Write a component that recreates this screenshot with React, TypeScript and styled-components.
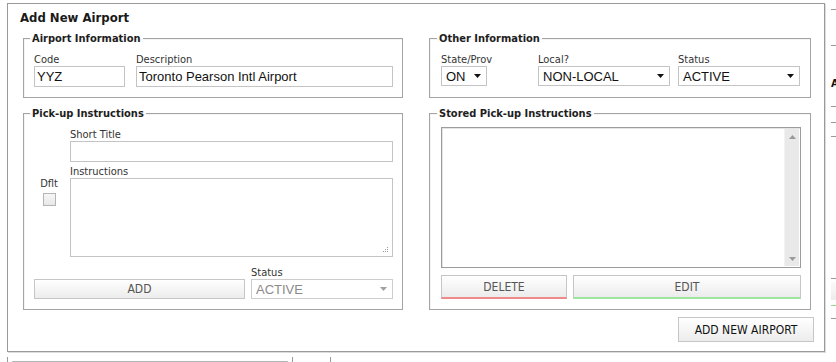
import React from "react";
import styled, { createGlobalStyle } from "styled-components";

const UI = `"DejaVu Sans Condensed", "DejaVu Sans", Verdana, sans-serif`;
const FIELD = `"Liberation Sans", Arial, sans-serif`;

const Global = createGlobalStyle`
  html, body { margin: 0; padding: 0; background: #fff; }
  body { font-family: ${UI}; color: #222; overflow: hidden; }
  * { box-sizing: border-box; }
`;

const Page = styled.div`
  width: 836px;
  height: 362px;
  overflow: hidden;
  padding: 3px 0 0 7px;
  display: flex;
  flex-direction: column;
`;

const TopRow = styled.div`
  display: flex;
  align-items: flex-start;
`;

const Panel = styled.section`
  flex: 0 0 818px;
  height: 349px;
  border: 1px solid #9a9a9a;
  box-shadow: 1px 1px 0 #dcdcdc;
  padding: 6px 13px 8px 15px;
  display: flex;
  flex-direction: column;
`;

const Title = styled.h1`
  margin: 0 0 5px -3px;
  font: bold 13px/16px ${UI};
  font-stretch: condensed;
  color: #1a1a1a;
`;

const Grid = styled.div`
  display: grid;
  grid-template-columns: 380px 382px;
  column-gap: 26px;
  row-gap: 8px;
`;

const Group = styled.fieldset<{ $pt?: number; $pl?: number }>`
  margin: 0;
  min-width: 0;
  border: 1px solid #a4a4a4;
  box-shadow: inset 1px 1px 0 #f4f4f4;
  padding: ${(p) => p.$pt ?? 8}px 9px 10px ${(p) => p.$pl ?? 10}px;
  display: flex;
  flex-direction: column;
`;

const Legend = styled.legend`
  margin-left: -4px;
  padding: 1px 2px 0 2px;
  font: bold 11px/13px ${UI};
  font-stretch: condensed;
  color: #1e1e1e;
`;

const Label = styled.label`
  display: block;
  font: 11px/13px ${UI};
  font-stretch: condensed;
  color: #333;
  white-space: nowrap;
`;

const FieldRow = styled.div<{ $cols: string; $gap: number }>`
  display: grid;
  grid-template-columns: ${(p) => p.$cols};
  column-gap: ${(p) => p.$gap}px;
  align-items: end;
`;

const Field = styled.div`
  display: flex;
  flex-direction: column;
  min-width: 0;
`;

const TextInput = styled.input`
  display: block;
  width: 100%;
  height: 21px;
  margin: 0;
  padding: 0 2px;
  border: 1px solid #c4c4c4;
  background: #fff;
  font: 13px ${FIELD};
  color: #111;
  outline: none;
`;

const SelectBox = styled.div<{ $w?: number; $disabled?: boolean }>`
  width: ${(p) => (p.$w ? `${p.$w}px` : "100%")};
  height: 20px;
  border: 1px solid ${(p) => (p.$disabled ? "#cdcdcd" : "#c4c4c4")};
  background: #fff;
  display: flex;
  align-items: center;
  justify-content: space-between;
  padding: 0 5px 0 4px;
  font: 13px ${FIELD};
  color: ${(p) => (p.$disabled ? "#8a8a8a" : "#111")};
`;

const Arrow = styled.svg<{ $disabled?: boolean }>`
  flex: 0 0 auto;
  width: 7px;
  height: 4px;
  fill: ${(p) => (p.$disabled ? "#a0a0a0" : "#111")};
`;

const Select = ({ value, w, disabled }: { value: string; w?: number; disabled?: boolean }) => (
  <SelectBox $w={w} $disabled={disabled} role="combobox">
    <span>{value}</span>
    <Arrow $disabled={disabled} viewBox="0 0 7 4">
      <path d="M0 0h7L3.5 4z" />
    </Arrow>
  </SelectBox>
);

const PickupBody = styled.div`
  display: grid;
  grid-template-columns: 30px 1fr;
  column-gap: 6px;
`;

const DfltCol = styled.div`
  display: flex;
  flex-direction: column;
  align-items: center;
  gap: 3px;
  padding-top: 49px;
`;

const Check = styled.span`
  display: block;
  width: 13px;
  height: 13px;
  border: 1px solid #b4b4b4;
  background: linear-gradient(#f6f6f6, #e8e8e8);
`;

const AreaWrap = styled.div`
  position: relative;
  height: 79px;
`;

const TextArea = styled.textarea`
  display: block;
  width: 100%;
  height: 100%;
  margin: 0;
  resize: none;
  border: 1px solid #c4c4c4;
  background: #fff;
  font: 13px ${FIELD};
  outline: none;
`;

const Grip = styled.svg`
  position: absolute;
  right: 4px;
  bottom: 4px;
  width: 7px;
  height: 7px;
  fill: #9a9a9a;
`;

const Spaced = styled.div<{ $mt: number }>`
  margin-top: ${(p) => p.$mt}px;
`;

const Button = styled.button<{ $accent?: string; $strong?: boolean; $h?: number }>`
  display: block;
  width: 100%;
  height: ${(p) => p.$h ?? 20}px;
  margin: 0;
  padding: 0;
  border: 1px solid #c6c6c6;
  ${(p) => (p.$accent ? `border-bottom: 2px solid ${p.$accent};` : "")}
  background: linear-gradient(#ffffff, #ececec);
  font: 12px ${UI};
  font-stretch: condensed;
  color: ${(p) => (p.$strong ? "#111" : "#555")};
  text-align: center;
  cursor: pointer;
`;

const ListBox = styled.div`
  height: 141px;
  border: 1px solid #9c9c9c;
  box-shadow: inset 1px 1px 0 #e4e4e4;
  background: #fff;
  display: flex;
  justify-content: flex-end;
  padding: 1px;
`;

const ScrollTrack = styled.div`
  width: 15px;
  background: #e9e9e9;
  border-left: 1px solid #f2f2f2;
  display: flex;
  flex-direction: column;
  justify-content: space-between;
  align-items: center;
  padding: 6px 0 5px;
`;

const ScrollArrow = styled.svg`
  width: 7px;
  height: 4px;
  fill: #9a9a9a;
`;

const ButtonRow = styled.div<{ $cols: string }>`
  display: grid;
  grid-template-columns: ${(p) => p.$cols};
  column-gap: 6px;
  margin-top: 7px;
`;

const BigButton = styled(Button)`
  width: 136px;
  align-self: flex-end;
  margin: 7px -3px 0 0;
`;

const Side = styled.div`
  flex: 0 0 200px;
  margin-left: 6px;
  display: flex;
  flex-direction: column;
`;

const SideRule = styled.div<{ $mt: number; $color?: string }>`
  margin-top: ${(p) => p.$mt}px;
  height: 1px;
  width: 40px;
  background: ${(p) => p.$color ?? "#9a9a9a"};
`;

const SideText = styled.div<{ $mt: number }>`
  margin-top: ${(p) => p.$mt}px;
  font: bold 11px/10px ${UI};
  color: #111;
`;

const SideBox = styled.div<{ $mt: number }>`
  margin-top: ${(p) => p.$mt}px;
  height: 18px;
  width: 40px;
  background: linear-gradient(#fafafa, #ececec);
`;

const BottomRow = styled.div`
  display: flex;
  height: 10px;
  margin-top: 5px;
`;

const BottomCell = styled.div<{ $w: number }>`
  flex: 0 0 ${(p) => p.$w}px;
  border-left: 1px solid #9a9a9a;
  padding: 4px 4px 0 4px;
`;

const StubInput = styled.div`
  height: 6px;
  border-top: 1px solid #b4b4b4;
  border-left: 1px solid #d0d0d0;
  border-right: 1px solid #d0d0d0;
`;

export default function App() {
  return (
    <>
      <Global />
      <Page>
        <TopRow>
          <Panel>
            <Title>Add New Airport</Title>
            <Grid>
              <Group>
                <Legend>Airport Information</Legend>
                <FieldRow $cols="91px 1fr" $gap={11}>
                  <Field>
                    <Label>Code</Label>
                    <TextInput defaultValue="YYZ" />
                  </Field>
                  <Field>
                    <Label>Description</Label>
                    <TextInput defaultValue="Toronto Pearson Intl Airport" />
                  </Field>
                </FieldRow>
              </Group>

              <Group $pl={11}>
                <Legend>Other Information</Legend>
                <FieldRow $cols="97px 140px 1fr" $gap={0}>
                  <Field>
                    <Label>State/Prov</Label>
                    <Select value="ON" w={46} />
                  </Field>
                  <Field>
                    <Label>Local?</Label>
                    <Select value="NON-LOCAL" w={132} />
                  </Field>
                  <Field>
                    <Label>Status</Label>
                    <Select value="ACTIVE" w={122} />
                  </Field>
                </FieldRow>
              </Group>

              <Group>
                <Legend>Pick-up Instructions</Legend>
                <PickupBody>
                  <DfltCol>
                    <Label>Dflt</Label>
                    <Check role="checkbox" aria-checked="false" />
                  </DfltCol>
                  <Field>
                    <Label>Short Title</Label>
                    <TextInput />
                    <Spaced $mt={3}>
                      <Label>Instructions</Label>
                    </Spaced>
                    <AreaWrap>
                      <TextArea />
                      <Grip viewBox="0 0 7 7">
                        <rect x="5" y="1" width="1" height="1" />
                        <rect x="3" y="3" width="1" height="1" />
                        <rect x="5" y="3" width="1" height="1" />
                        <rect x="1" y="5" width="1" height="1" />
                        <rect x="3" y="5" width="1" height="1" />
                        <rect x="5" y="5" width="1" height="1" />
                      </Grip>
                    </AreaWrap>
                  </Field>
                </PickupBody>
                <Spaced $mt={9}>
                  <FieldRow $cols="211px 1fr" $gap={6}>
                    <Button>ADD</Button>
                    <Field>
                      <Label>Status</Label>
                      <Select value="ACTIVE" disabled />
                    </Field>
                  </FieldRow>
                </Spaced>
              </Group>

              <Group $pl={11} $pt={7}>
                <Legend>Stored Pick-up Instructions</Legend>
                <ListBox>
                  <ScrollTrack>
                    <ScrollArrow viewBox="0 0 7 4">
                      <path d="M0 4h7L3.5 0z" />
                    </ScrollArrow>
                    <ScrollArrow viewBox="0 0 7 4">
                      <path d="M0 0h7L3.5 4z" />
                    </ScrollArrow>
                  </ScrollTrack>
                </ListBox>
                <ButtonRow $cols="126px 1fr">
                  <Button $accent="#f08a8a" $h={24}>DELETE</Button>
                  <Button $accent="#9ee59e" $h={24}>EDIT</Button>
                </ButtonRow>
              </Group>
            </Grid>
            <BigButton $strong $h={25}>ADD NEW AIRPORT</BigButton>
          </Panel>

          <Side>
            <SideRule $mt={6} />
            <SideRule $mt={35} />
            <SideText $mt={33}>A</SideText>
            <SideRule $mt={17} />
            <SideRule $mt={15} />
            <SideRule $mt={13} />
            <SideRule $mt={141} />
            <SideBox $mt={3} />
            <SideRule $mt={5} $color="#8fdc8f" />
            <SideRule $mt={12} />
          </Side>
        </TopRow>
        <BottomRow>
          <BottomCell $w={285}>
            <StubInput />
          </BottomCell>
          <BottomCell $w={38} />
          <BottomCell $w={100} />
        </BottomRow>
      </Page>
    </>
  );
}
